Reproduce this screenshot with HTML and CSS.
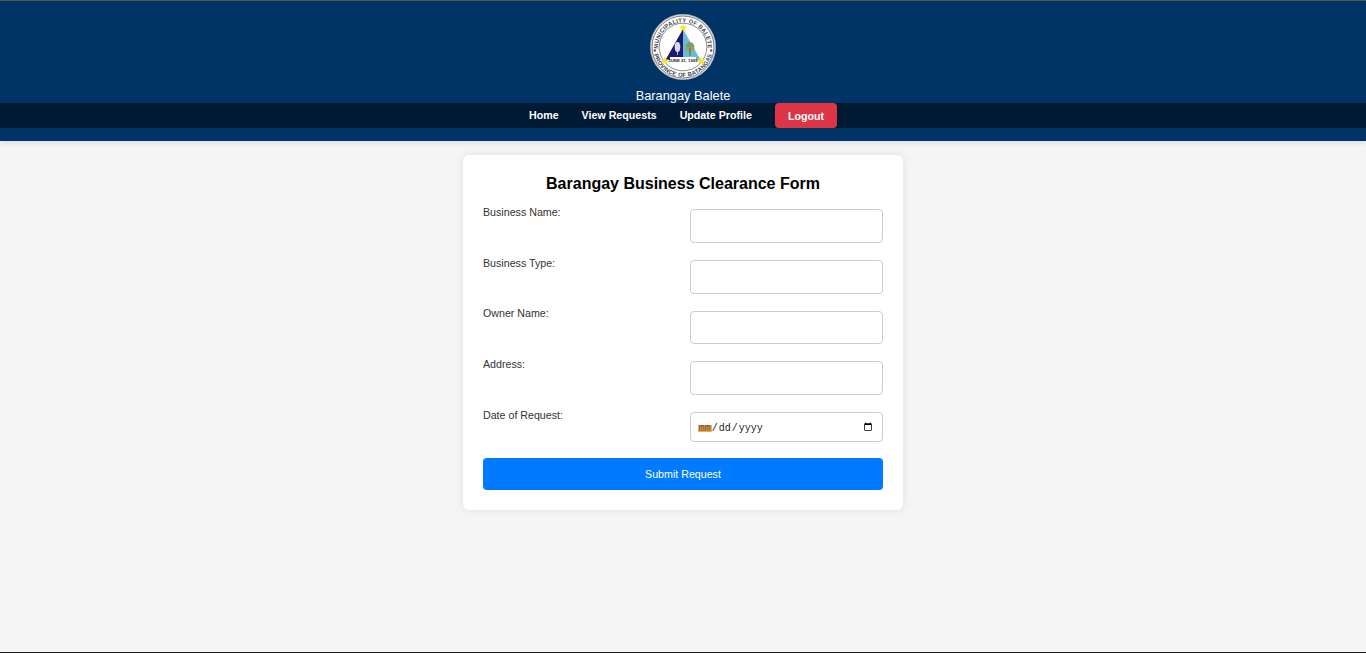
FILE: index.html
```html
<!DOCTYPE html>
<html lang="en">
<head>
<meta charset="utf-8">
<title>Barangay Business Clearance Form</title>
<link rel="stylesheet" href="styles.css">
</head>
<body>
<header class="site-header">
  <svg class="logo" viewBox="0 0 66 66" aria-hidden="true">
    <defs>
      <path id="ring-top" d="M8.500 37 A24.800 24.800 0 1 1 57.500 37"/>
      <path id="ring-bottom" d="M4.100 41 A30 30 0 0 0 61.900 41"/>
    </defs>
    <circle cx="33" cy="33" r="32.700" fill="#e4e4e4" stroke="#a8a8a8" stroke-width=".6"/>
    <circle cx="33" cy="33" r="31" fill="#fff" stroke="#6d7078" stroke-width=".9"/>
    <circle cx="33" cy="33" r="23.800" fill="#fff" stroke="#6d7078" stroke-width=".8"/>
    <text class="ring-text"><textPath href="#ring-top" startOffset="50%" text-anchor="middle">MUNICIPALITY OF BALETE</textPath></text>
    <text class="ring-text"><textPath href="#ring-bottom" startOffset="50%" text-anchor="middle">PROVINCE OF BATANGAS</textPath></text>
    <circle cx="4.800" cy="36.500" r="1.200" fill="#555"/>
    <circle cx="61.200" cy="36.500" r="1.200" fill="#555"/>
    <path d="M33 15 L33 46 L15.500 46Z" fill="#1c1a70"/>
    <path d="M33 15 L50.500 46 L33 46Z" fill="#68bdd6"/>
    <ellipse cx="27.500" cy="33" rx="2.800" ry="5" fill="#d9dbe6"/>
    <path d="M27.500 38v3" stroke="#d9dbe6" stroke-width=".8"/>
    <circle cx="40" cy="32.500" r="4.300" fill="#7f9c63"/>
    <circle cx="37.500" cy="35" r="2.200" fill="#96a86e"/>
    <circle cx="42.500" cy="35" r="2.200" fill="#96a86e"/>
    <path d="M40 34v8" stroke="#8a6a44" stroke-width="1.300"/>
    <rect x="20" y="43" width="26" height="6" fill="#fff"/>
    <text class="date-text" x="33" y="48" text-anchor="middle">JUNE 21, 1969</text>
    <path class="star" d="M33 9.500l1.200 2.900 3 .2-2.300 2 .8 3-2.700-1.600-2.700 1.600.8-3-2.300-2 3-.2Z"/>
    <path class="star" d="M15 42.500l1.200 2.900 3 .2-2.300 2 .8 3-2.700-1.600-2.700 1.600.8-3-2.300-2 3-.2Z"/>
    <path class="star" d="M51 42.500l1.200 2.900 3 .2-2.300 2 .8 3-2.700-1.600-2.700 1.600.8-3-2.300-2 3-.2Z"/>
  </svg>
  <div class="brand">Barangay Balete</div>
  <nav class="main-nav">
    <a href="#" class="nav-link">Home</a>
    <a href="#" class="nav-link">View Requests</a>
    <a href="#" class="nav-link">Update Profile</a>
    <a href="#" class="logout">Logout</a>
  </nav>
</header>
<main class="card">
  <h2>Barangay Business Clearance Form</h2>
  <form>
    <div class="row"><label for="bn">Business Name:</label><input id="bn" type="text"></div>
    <div class="row"><label for="bt">Business Type:</label><input id="bt" type="text"></div>
    <div class="row"><label for="on">Owner Name:</label><input id="on" type="text"></div>
    <div class="row"><label for="ad">Address:</label><input id="ad" type="text"></div>
    <div class="row row-last"><label for="dr">Date of Request:</label><input id="dr" type="date" class="date"></div>
    <button type="button" class="submit">Submit Request</button>
  </form>
</main>
<div class="edge-mark"></div>
</body>
</html>
```
FILE: styles.css
```css
* { box-sizing: border-box; }
html, body { height: 100%; }
body {
  margin: 0;
  position: relative;
  background: #f5f5f5;
  font-family: "Liberation Sans", Arial, sans-serif;
  border-bottom: 1px solid #1a1a1a;
  overflow: hidden;
}
.edge-mark {
  position: absolute;
  left: 345px;
  bottom: -1px;
  width: 48px;
  height: 1px;
  background: #4a4a4a;
}
.site-header {
  height: 141px;
  background: #003366;
  border-top: 1px solid #555;
  box-shadow: 0 2px 6px rgba(0,0,0,.1);
  display: flex;
  flex-direction: column;
  align-items: center;
  padding-top: 13px;
}
.logo { width: 66px; height: 66px; display: block; }
.ring-text {
  font-family: "Liberation Sans", Arial, sans-serif;
  font-size: 5.800px;
  font-weight: 700;
  letter-spacing: .25px;
  fill: #3f4450;
}
.date-text {
  font-family: "Liberation Sans", Arial, sans-serif;
  font-size: 4.300px;
  font-weight: 700;
  fill: #222;
}
.star { fill: #f6e62c; }
.brand {
  color: #fff;
  font-size: 12.800px;
  line-height: 15px;
  margin-top: 8px;
}
.main-nav {
  align-self: stretch;
  height: 25px;
  background: #001a33;
  display: flex;
  justify-content: center;
  align-items: center;
  gap: 23px;
}
.nav-link, .logout {
  color: #fff;
  font-size: 10.670px;
  font-weight: 700;
  text-decoration: none;
}
.nav-link { padding-bottom: 1px; }
.logout {
  background: #dc3545;
  border-radius: 4px;
  height: 25px;
  padding: 1px 13px 0;
  display: flex;
  align-items: center;
}
.card {
  width: 440px;
  margin: 14px auto 0;
  padding: 20px;
  background: #fff;
  border-radius: 6px;
  box-shadow: 0 0 8px rgba(0,0,0,.1);
}
h2 {
  margin: 0 0 16px;
  text-align: center;
  font-size: 16px;
  line-height: 18px;
  color: #000;
}
.row {
  display: flex;
  justify-content: space-between;
  margin-bottom: 17px;
}
.row-last { margin-bottom: 16px; }
label {
  font-size: 10.670px;
  color: #333;
  line-height: 12px;
  margin-top: -3.100px;
}
input {
  width: 193px;
  height: 33.750px;
  border: 1px solid #ccc;
  border-radius: 4px;
  padding: 6.670px;
  background: #fff;
}
.date {
  height: 30px;
  font-family: "Liberation Mono", monospace;
  font-size: 10px;
  color: #222;
}
.date::-webkit-datetime-edit { padding-top: 2px; }
.date::-webkit-datetime-edit-month-field {
  background: linear-gradient(transparent 25%, #eab060 25%, #eab060 80%, transparent 80%);
  color: #6a4412;
}
.submit {
  display: block;
  width: 100%;
  height: 32px;
  border: 0;
  border-radius: 4px;
  background: #007bff;
  color: #fff;
  font-family: inherit;
  font-size: 10.670px;
  font-weight: 400;
}
```
